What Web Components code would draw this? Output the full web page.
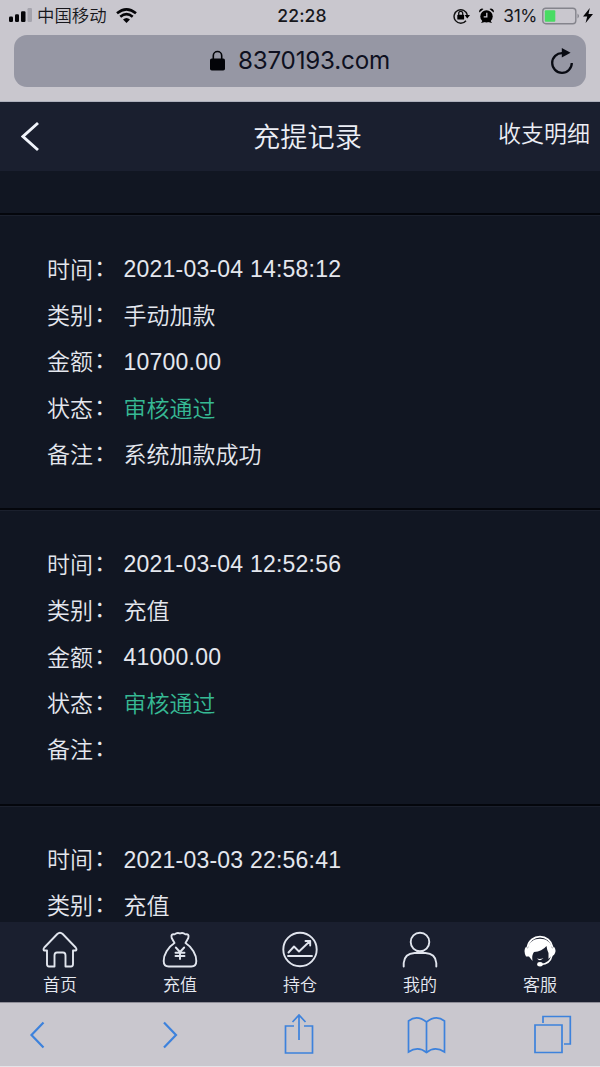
<!DOCTYPE html>
<html lang="zh-CN">
<head>
<meta charset="utf-8">
<title>充提记录</title>
<style>
html,body{margin:0;height:1067px;overflow:hidden;background:#111622}
</style>
</head>
<body>
<phone-screen></phone-screen>
<script>
const define = (name, html) => {
  const t = document.createElement('template');
  t.innerHTML = html;
  customElements.define(name, class extends HTMLElement {
    constructor() {
      super();
      this.attachShadow({mode: 'open'}).append(t.content.cloneNode(true));
    }
  });
};

define('status-bar', `
<style>
:host{display:flex;align-items:center;height:31px;padding:0 7px 0 9px;box-sizing:border-box;color:#17171c;font-size:17px;line-height:31px}
.side{flex:1;display:flex;align-items:center;white-space:nowrap}
.right{justify-content:flex-end}
.carrier{margin:-2px 9px 0 5px;font-size:17.4px}
.time{font-size:17.6px;font-weight:500;font-family:Inter,sans-serif;letter-spacing:.1px;width:50px;text-align:center;padding-left:2px}
svg{flex:none;display:block}
.pct{font-family:Inter,sans-serif;font-weight:400;font-size:17.4px;letter-spacing:-.4px;margin:0 5px 0 9px}
</style>
<div class="side">
<svg width="23" height="15" viewBox="0 0 23 15"><g fill="#050508"><rect y="8.500" width="4" height="5.500" rx="1.200"/><rect x="6" y="6.300" width="4" height="7.700" rx="1.200"/><rect x="12" y="3.300" width="4.500" height="10.700" rx="1.200"/></g><rect x="18.500" y="0" width="4.500" height="14" rx="1.200" fill="#a5a4ad"/></svg>
<span class="carrier">中国移动</span>
<svg width="21" height="15" viewBox="0 0 21 15" fill="none" stroke="#050508" stroke-width="2.6"><path d="M1 5.3Q10.5-2.6 20 5.3M4.3 8.8Q10.5 3.5 16.7 8.8"/><path d="M7 11.6Q10.5 8.4 14 11.6L10.5 15Z" fill="#050508" stroke="none"/></svg>
</div>
<div class="time">22:28</div>
<div class="side right">
<svg width="17" height="16" viewBox="0 0 17 16"><path d="M13 12.7A6.700 6.700 0 1 1 14.300 7" fill="none" stroke="#111" stroke-width="1.400"/><path d="M11.600 7H17l-2.700 3.400Z"/><rect x="4.300" y="6.800" width="6.800" height="4.800" rx=".7"/><path d="M5.700 7V5.400a2 2 0 0 1 4 0V7" fill="none" stroke="#111" stroke-width="1.300"/></svg>
<svg style="margin-left:9px" width="15" height="16" viewBox="0 0 15 16"><circle cx="7.500" cy="8.400" r="6.200"/><path d="M.3 4.500A3 3 0 0 1 4.500.9ZM10.500.9A3 3 0 0 1 14.700 4.500ZM2 15l2-3 2 2ZM13 15l-2-3-2 2Z"/><path d="M7.800 4.700v4.200H4.700" fill="none" stroke="#cac9d1" stroke-width="1.300"/></svg>
<span class="pct">31%</span>
<svg width="38" height="18" viewBox="0 0 38 18"><rect x=".8" y="1.300" width="33" height="15.400" rx="3" fill="none" stroke="#84848c" stroke-width="1.400"/><rect x="2.800" y="3.300" width="10.500" height="11.400" rx="1" fill="#48dc63"/><path d="M35.500 6.500q3 2.500 0 5Z" fill="#84848c"/></svg>
<svg style="margin-left:3px" width="10" height="15" viewBox="0 0 10 15"><path d="M6.800 0 0 8.400h4.200L2.600 15 10 6H5.500Z" fill="#050508"/></svg>
</div>`);

define('address-bar', `
<style>
:host{display:flex;align-items:center;height:52px;margin:4px 14px 0;border-radius:13px;background:#9697a4;color:#0e1020;box-sizing:border-box;padding:0 12px 0 195px}
.url{font:24.200px/52px Inter,"Liberation Sans",sans-serif;margin-left:12px;flex:1;letter-spacing:-.2px}
svg{flex:none}
.lock{margin-top:-2px}
</style>
<svg class="lock" width="17" height="21" viewBox="0 0 17 21"><rect x="1" y="8.500" width="15" height="12" rx="1.800" fill="#030408"/><path d="M4.300 9V5.700a4.200 4.200 0 0 1 8.400 0V9" fill="none" stroke="#030408" stroke-width="1.600"/></svg>
<span class="url"><slot></slot></span>
<svg width="24" height="27" viewBox="0 0 24 27"><path d="M12.200 5.200A9.800 9.800 0 1 0 21.800 15" fill="none" stroke="#080a12" stroke-width="2.300"/><path d="M11.800 0 20.600 4.700 11.800 9.500Z" fill="#080a12"/></svg>`);

define('page-header', `
<style>
:host{display:grid;grid-template-columns:1fr auto 1fr;height:69px;box-sizing:border-box;background:#1a1f2f;color:#eceef5}
.back{padding:19px 0 0 21px}
h1{font-size:27.200px;font-weight:350;line-height:65px;margin:1px 0 0 15px}
.action{text-align:right;padding-right:10px;font-size:23px;line-height:60px}
.action,h1{white-space:nowrap}
</style>
<div class="back"><svg width="19" height="31" viewBox="0 0 19 31"><path d="M17 2 2 15.500 17 29" fill="none" stroke="#f1f4fb" stroke-width="2.900"/></svg></div>
<h1><slot></slot></h1>
<div class="action"><slot name="action"></slot></div>`);

define('record-card', `
<style>
:host{display:block;height:295.3px;box-sizing:border-box;border-top:2px solid #04060c;box-shadow:inset 0 1px #1b202d;padding:29.500px 47px 0}
</style><slot></slot>`);

define('record-row', `
<style>
:host{display:flex;height:46.400px;line-height:46.400px;font-size:23px;color:#e4e7ee;white-space:nowrap}
.k{width:76.500px;flex:none}
.v{color:var(--value,#e4e7ee)}
.c{display:inline-block;line-height:1;transform:translate(1px,-2px)}
:host([num]) .v{font-family:"Liberation Sans",Arial,sans-serif;font-size:23px;letter-spacing:.22px;padding-top:1.500px}
</style><span class="k"><slot name="label"></slot><span class="c">：</span></span><span class="v"><slot></slot></span>`);

define('tab-item', `
<style>
:host{display:flex;flex-direction:column;align-items:center;flex:1;padding-top:7.500px;color:#e7eaf2;font-size:17px;line-height:24px}
.i{height:42.500px}
::slotted(svg){display:block}
</style><div class="i"><slot name="icon"></slot></div><slot></slot>`);

define('tab-bar', `
<style>
:host{display:flex;height:80px;background:#1a1f2f}
svg{fill:none;stroke:#e1e5ee;stroke-width:1.900;stroke-linejoin:round;stroke-linecap:round}
</style>
<tab-item><svg slot="icon" width="40" height="40" viewBox="0 0 40 40"><path d="M17.300 4Q20 1.300 22.700 4L35.700 17.500Q37 19 36 20.500H33V34Q33 36.500 31 36.500H25.500V25.500Q25.500 22.500 23 22.500H17Q14.500 22.500 14.500 25.500V36.500H9Q7 36.500 7 34V20.500H4Q3 19 4.300 17.500Z"/></svg>首页</tab-item>
<tab-item><svg slot="icon" width="40" height="40" viewBox="0 0 40 40"><path d="M14.500 13 11.700 8Q10.500 3.700 14.500 4.400Q17.300 2 20 3.500Q22.700 2 25.500 4.400Q29.500 3.700 28.300 8L25.500 13M14.500 13C8 17 3.500 25 3.700 31Q3.700 36.500 8.700 36.500H31.300Q36.300 36.500 36.300 31C36.500 25 32 17 25.500 13M15.800 17.500 20 22 24.200 17.500M20 22V29M15.500 22.700H24.500M15.500 26H24.500"/></svg>充值</tab-item>
<tab-item><svg slot="icon" width="40" height="40" viewBox="0 0 40 40"><circle cx="20" cy="19.500" r="16.700"/><path d="M8.500 22.500 14 16.500 19 21.500 29.500 11.500M25.500 11H30.200V15.500M8 26H32"/></svg>持仓</tab-item>
<tab-item><svg slot="icon" width="40" height="40" viewBox="0 0 40 40"><circle cx="20" cy="12" r="9.300"/><path d="M3.700 36.500V33Q4.500 23.500 14.500 23H25.500Q35.500 23.500 36.300 33V36.500"/></svg>我的</tab-item>
<tab-item><svg slot="icon" width="40" height="40" viewBox="0 0 40 40"><path d="M7.500 17A12.700 12.700 0 0 1 32.500 17" stroke="#fff" stroke-width="1.700"/><path d="M8 18.500C9 5.500 31 5.500 32 18.500L34 16.800Q37 20.500 34 25L31 26.500L28.500 29V23Q27 20 26.500 16Q22 21.500 14 22Q11.500 25 12.500 31L9 26.500H6Q3 20.500 6 16.800Z" fill="#fff" stroke="none"/><path d="M32 25.500Q30 34 21 34.500" stroke="#fff" stroke-width="1.500"/><path d="M17 28.500Q20 29.500 23.500 28Q20 32 17 28.500Z" fill="#fff" stroke="none"/><ellipse cx="20" cy="34.300" rx="2.800" ry="2.200" fill="#fff" stroke="none"/></svg>客服</tab-item>`);

define('browser-toolbar', `
<style>
:host{display:flex;align-items:flex-start;height:65px;background:#c9c7ce;border-top:1px solid #8f8e98;border-bottom:1px solid #e5e4e8;box-sizing:border-box;padding:8px 0 0 28px}
svg{fill:none;stroke:#3d82dc;stroke-width:1.700;display:block;flex:none}
.forward{margin-left:113px}.share{margin-left:101px}.book{margin-left:92px}.pages{margin-left:86px}
</style>
<svg width="20" height="48" viewBox="0 0 20 48"><path d="M15.500 11.500 3.500 24 15.500 36.500" stroke-width="2.200"/></svg>
<svg class="forward" width="20" height="48" viewBox="0 0 20 48"><path d="M3 11.500 15 24 3 36.500" stroke-width="2.200"/></svg>
<svg class="share" width="32" height="48" viewBox="0 0 32 48"><path d="M12 15H3.500V42H30.500V15H22M17 29V4.500M10.500 11 17 4 23.500 11"/></svg>
<svg class="book" width="40" height="48" viewBox="0 0 40 48"><path d="M20.500 11Q11 3.500 2.500 10V41Q12 34.500 20.500 41.500Q29 34.500 38.500 41V10Q30 3.500 20.500 11ZM20.500 11V42"/></svg>
<svg class="pages" width="40" height="48" viewBox="0 0 40 48"><path d="M3 14H30V41.500H3ZM11 12V5.500H38.300V33H32"/></svg>`);

define('phone-screen', `
<style>
:host{display:flex;flex-direction:column;width:600px;height:1067px;overflow:hidden;background:#111622;font-family:"Noto Sans CJK SC",sans-serif;font-weight:350}
.chrome{height:102px;flex:none;background:#c9c7ce;box-sizing:border-box;border-bottom:1px solid #aeb0bc}
main{flex:1;min-height:0;overflow:hidden;padding-top:42px;box-sizing:border-box}
tab-bar,browser-toolbar,page-header{flex:none}
.ok{--value:#36b994}
</style>
<div class="chrome"><status-bar></status-bar><address-bar>8370193.com</address-bar></div>
<page-header>充提记录<span slot="action">收支明细</span></page-header>
<main>
<record-card>
<record-row num><span slot="label">时间</span>2021-03-04 14:58:12</record-row>
<record-row><span slot="label">类别</span>手动加款</record-row>
<record-row num><span slot="label">金额</span>10700.00</record-row>
<record-row class="ok"><span slot="label">状态</span>审核通过</record-row>
<record-row><span slot="label">备注</span>系统加款成功</record-row>
</record-card>
<record-card>
<record-row num><span slot="label">时间</span>2021-03-04 12:52:56</record-row>
<record-row><span slot="label">类别</span>充值</record-row>
<record-row num><span slot="label">金额</span>41000.00</record-row>
<record-row class="ok"><span slot="label">状态</span>审核通过</record-row>
<record-row><span slot="label">备注</span></record-row>
</record-card>
<record-card>
<record-row num><span slot="label">时间</span>2021-03-03 22:56:41</record-row>
<record-row><span slot="label">类别</span>充值</record-row>
</record-card>
</main>
<tab-bar></tab-bar>
<browser-toolbar></browser-toolbar>`);
</script>
</body>
</html>
